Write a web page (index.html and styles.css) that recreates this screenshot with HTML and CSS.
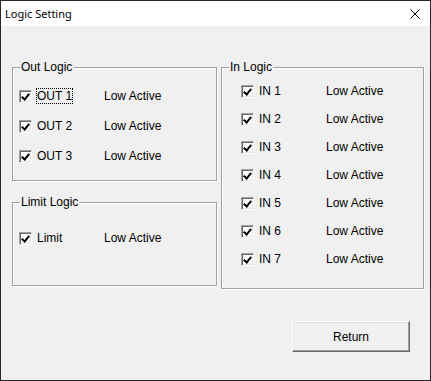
FILE: index.html
```html
<!DOCTYPE html>
<html lang="en">
<head>
  <meta charset="UTF-8">
  <title>Logic Setting</title>
  <link rel="stylesheet" href="styles.css">
</head>
<body>
  <div class="window">
    <div class="titlebar">
      <span class="titleText">Logic Setting</span>
      <svg class="closeIcon" width="10" height="10" viewBox="0 0 10 10">
        <path d="M0.5 0.5 L9.5 9.5 M9.5 0.5 L0.5 9.5" stroke="#000" stroke-width="1" fill="none"/>
      </svg>
    </div>

    <div class="content">
      <div class="groups">
        <div class="leftColumn">
          <div class="group outGroup">
            <span class="groupTitle">Out Logic</span>
            <div class="list outList">
              <div class="row"><span class="check"></span><span class="label focused">OUT 1</span><span>Low Active</span></div>
              <div class="row"><span class="check"></span><span class="label">OUT 2</span><span>Low Active</span></div>
              <div class="row"><span class="check"></span><span class="label">OUT 3</span><span>Low Active</span></div>
            </div>
          </div>

          <div class="group limitGroup">
            <span class="groupTitle">Limit Logic</span>
            <div class="list">
              <div class="row"><span class="check"></span><span class="label">Limit</span><span>Low Active</span></div>
            </div>
          </div>
        </div>

        <div class="group inGroup">
          <span class="groupTitle">In Logic</span>
          <div class="list inList">
            <div class="row"><span class="check"></span><span class="label">IN 1</span><span>Low Active</span></div>
            <div class="row"><span class="check"></span><span class="label">IN 2</span><span>Low Active</span></div>
            <div class="row"><span class="check"></span><span class="label">IN 3</span><span>Low Active</span></div>
            <div class="row"><span class="check"></span><span class="label">IN 4</span><span>Low Active</span></div>
            <div class="row"><span class="check"></span><span class="label">IN 5</span><span>Low Active</span></div>
            <div class="row"><span class="check"></span><span class="label">IN 6</span><span>Low Active</span></div>
            <div class="row"><span class="check"></span><span class="label">IN 7</span><span>Low Active</span></div>
          </div>
        </div>
      </div>

      <div class="actions">
        <button class="button">Return</button>
      </div>
    </div>
  </div>
</body>
</html>
```

FILE: styles.css
```css
html, body {
  margin: 0;
  padding: 0;
  background-color: #f0f0f0;
}

.window {
  width: 431px;
  height: 381px;
  box-sizing: border-box;
  border: 1px solid #262626;
  background-color: #f0f0f0;
  display: flex;
  flex-direction: column;
  font-family: 'Liberation Sans', Arial, sans-serif;
  font-size: 12px;
  color: #000;
}

.titlebar {
  height: 25px;
  background-color: #ffffff;
  display: flex;
  align-items: center;
  justify-content: space-between;
  padding-left: 4px;
  padding-right: 10px;
}

.titleText {
  font-family: 'Noto Sans', 'Open Sans', sans-serif;
  font-size: 11px;
  color: #000;
}

.closeIcon {
  display: block;
}

.content {
  padding: 41px 0 0 11px;
}

.groups {
  display: grid;
  grid-template-columns: 205px 203px;
  column-gap: 4px;
  align-items: start;
}

.leftColumn {
  display: flex;
  flex-direction: column;
  gap: 21px;
}

.group {
  position: relative;
  box-sizing: border-box;
  border: 1px solid #a0a0a0;
  box-shadow: inset 1px 1px 0 #ffffff, 1px 1px 0 #ffffff;
}

.groupTitle {
  position: absolute;
  top: -8px;
  left: 7px;
  padding: 0 1px;
  line-height: 14px;
  background-color: #f0f0f0;
}

.outGroup {
  height: 114px;
  padding: 18px 0 0 6px;
}

.limitGroup {
  height: 84px;
  padding: 25px 0 0 6px;
}

.inGroup {
  height: 222px;
  padding: 13px 0 0 19px;
}

.list {
  display: flex;
  flex-direction: column;
}

.outList {
  gap: 10px;
}

.inList {
  gap: 8px;
}

.row {
  display: grid;
  grid-template-columns: 13px 64px auto;
  column-gap: 4px;
  align-items: center;
  height: 20px;
}

.check {
  position: relative;
  width: 13px;
  height: 13px;
  box-sizing: border-box;
  border: 1px solid;
  border-color: #a0a0a0 #ffffff #ffffff #a0a0a0;
  box-shadow: inset 1px 1px 0 #696969, inset -1px -1px 0 #e3e3e3;
  background-color: #ffffff;
}

.check::after {
  content: '';
  position: absolute;
  left: 3px;
  top: 1px;
  width: 3px;
  height: 6px;
  border-right: 2px solid #000;
  border-bottom: 2px solid #000;
  transform: rotate(40deg);
}

.label {
  justify-self: start;
  border: 1px dotted transparent;
  line-height: 14px;
}

.label.focused {
  border-color: #000;
}

.actions {
  display: flex;
  justify-content: flex-end;
  padding-right: 20px;
  margin-top: 32px;
}

.button {
  width: 118px;
  height: 31px;
  box-sizing: border-box;
  border: 1px solid;
  border-color: #ffffff #696969 #696969 #ffffff;
  box-shadow: inset -1px -1px 0 #a0a0a0, inset 1px 1px 0 #e3e3e3;
  background-color: #f0f0f0;
  font-family: 'Liberation Sans', Arial, sans-serif;
  font-size: 12px;
  color: #000;
  padding: 0;
}
```
